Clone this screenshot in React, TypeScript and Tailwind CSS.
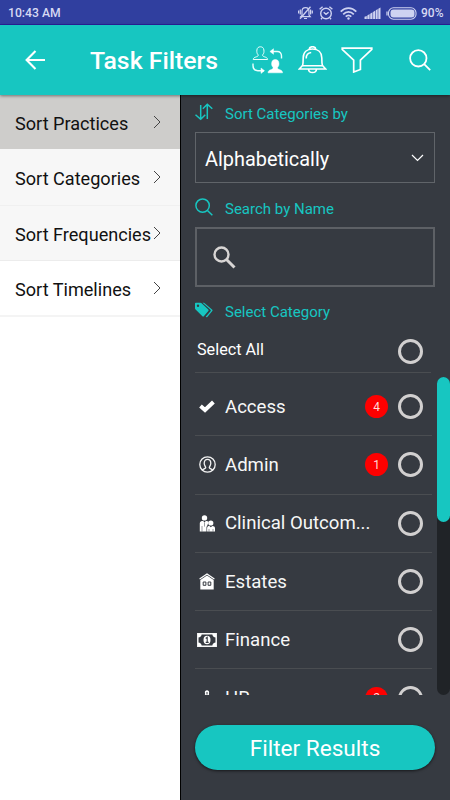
import type { ReactNode } from "react"

const menuItems = [
  { label: "Sort Practices", className: "h-[54px] bg-[#cecdcb]" },
  { label: "Sort Categories", className: "h-[57px] border-b border-[#f0f0f0] bg-[#f7f7f7]" },
  { label: "Sort Frequencies", className: "h-[55px] border-b border-[#ececec] bg-[#f7f7f7]" },
  { label: "Sort Timelines", className: "h-[56px] border-b-2 border-[#f4f4f4] bg-white" },
]

const categories: { label: string; icon: ReactNode; count?: number }[] = [
  { label: "Access", icon: <CheckIcon />, count: 4 },
  { label: "Admin", icon: <UserCircleIcon />, count: 1 },
  { label: "Clinical Outcom...", icon: <PeopleIcon /> },
  { label: "Estates", icon: <HouseIcon /> },
  { label: "Finance", icon: <MoneyIcon /> },
  { label: "HR", icon: <PersonIcon />, count: 2 },
]

function BackIcon() {
  return (
    <svg width="21" height="20" viewBox="0 0 21 20" fill="none" stroke="#fff" strokeWidth="2.1">
      <path d="M10.500 1 1.600 10l8.900 9M1.600 10H20" />
    </svg>
  )
}

function SwapUsersIcon() {
  return (
    <svg width="32" height="28" viewBox="0 0 32 28" fill="none" stroke="#e9fffd" strokeWidth="1">
      <path d="M1.200 13.500c.2-1.800 1.500-2.100 3.200-2.700 1.500-.5 2-.9 1.700-2C4.800 7.500 4.700 5.700 4.900 4 5.100 1.700 6.600.8 8.400.8s3.300.9 3.500 3.200c.2 1.700.1 3.500-1.200 4.800-.3 1.100.2 1.500 1.700 2 1.700.6 3 .9 3.200 2.700Z" />
      <path
        d="M16 26.800c.2-2.200 1.500-2.600 3.400-3.300 1.500-.5 1.900-1.100 1.600-2.200-1.300-1.400-1.500-2.700-1.300-4.500.2-2.300 1.800-3.300 3.600-3.300s3.400 1 3.600 3.300c.2 1.800 0 3.100-1.300 4.500-.3 1.100.1 1.700 1.600 2.200 1.900.7 3.200 1.100 3.400 3.300Z"
        fill="#fff"
        stroke="#fff"
        strokeWidth=".5"
      />
      <path d="M29.500 12.500V10c0-3-1.500-4.500-4.200-4.500h-6M1 17.500v2c0 3.500 1.500 5.200 4.800 5.200h6" strokeWidth="1.400" />
      <path d="m21.500 2.700-3.600 2.800 3.600 2.800ZM9 22l3.500 2.700L9 27.400Z" fill="#fff" strokeWidth=".5" />
    </svg>
  )
}

function BellIcon() {
  return (
    <svg width="29" height="28" viewBox="0 0 29 28" fill="none" stroke="#fff" strokeWidth="1.600">
      <path d="M11.300 3.500c0-3.700 6.400-3.700 6.400 0M4.500 20c.7-2.500.7-5 .7-8 0-5.600 3.800-9 9.300-9s9.300 3.400 9.300 9c0 3 0 5.500.7 8" />
      <path d="M4.300 19.700h20.400l3 3.300H1.300ZM10.500 23.200c.3 4.400 7.700 4.400 8 0" />
      <path d="M8.200 12.500c0-3.300 1.800-5.700 5-6" />
    </svg>
  )
}

function FilterIcon() {
  return (
    <svg width="32" height="26" viewBox="0 0 32 26" fill="none" stroke="#fff" strokeWidth="1.700">
      <path d="M1.200 1.200h29.600v1.300L19.400 13v9.500L12.700 25V13L1.200 2.500Z" />
    </svg>
  )
}

function SearchIcon({ className }: { className?: string }) {
  return (
    <svg viewBox="0 0 22 22" fill="none" stroke="currentColor" strokeWidth="1.800" className={className}>
      <circle cx="9.300" cy="9.300" r="8.200" />
      <path d="m15.200 15.200 6 6" />
    </svg>
  )
}

function StatusIcons() {
  return (
    <div className="flex items-center text-[#ced2f1]">
      <svg width="15" height="14" viewBox="0 0 15 14" fill="none" stroke="currentColor" strokeWidth="1.200">
        <path d="M4 10V5.500C4 3 5.300 1.700 7.500 1.700S11 3 11 5.500V9l1.300 1.700H2.800L4 9.500M6 12.500h3M12.600 3.500v5M14.300 4.500v3M2.300 3.500v5M.6 4.500v3" />
        <path d="M12.500 .8 2 12.800" strokeWidth="1.300" />
      </svg>
      <svg width="14" height="14" viewBox="0 0 14 14" fill="none" stroke="currentColor" strokeWidth="1.400" className="ml-[6px]">
        <circle cx="7" cy="7.500" r="5.300" />
        <path d="M.6 3.300 3.600.8M13.400 3.300l-3-2.500M4.700 6.300 7 8.300l2.600-2M3 12l-1 1.300M11 12l1 1.300" />
      </svg>
      <svg width="17" height="13" viewBox="0 0 17 13" fill="none" stroke="currentColor" strokeWidth="1.700" className="ml-[7px]">
        <path d="M.7 4.700c4.500-4.700 11.100-4.700 15.600 0M3.200 7.300c3.100-3.200 7.500-3.200 10.600 0M5.700 9.700c1.700-1.800 3.900-1.800 5.600 0" />
        <circle cx="8.500" cy="11.500" r="1.200" fill="currentColor" stroke="none" />
      </svg>
      <svg width="17" height="12" viewBox="0 0 17 12" fill="currentColor" className="ml-[7px]">
        <path d="M.5 9.700 2.800 9v3H.5ZM3.300 8.500 5.600 7v5H3.300ZM6.200 6.700l2.300-1.400V12H6.200ZM9.100 4.900l2.200-1.300V12H9.100ZM11.900 3.200l1.800-1.100V12h-1.800ZM14.300 1.800 16.500.5V12h-2.200Z" />
      </svg>
      <svg width="31" height="13" viewBox="0 0 31 13" fill="none" stroke="currentColor" className="ml-[5px]">
        <rect x="2.500" y=".8" width="27.500" height="11.400" rx="5" strokeWidth="1.100" />
        <rect x="4.500" y="2.500" width="24" height="8" rx="3" fill="currentColor" stroke="none" />
        <path d="M1 4.500v4" strokeWidth="1.300" />
      </svg>
    </div>
  )
}

function SortIcon() {
  return (
    <svg width="18" height="18" viewBox="0 0 18 18" fill="none" stroke="currentColor" strokeWidth="1.500">
      <path d="M5.700 2v14M.5 11.700l5.200 4.600 4.600-4.600M12.300 16V1.500M7.800 5.700l4.500-4.500 5 4.500" />
    </svg>
  )
}

function TagsIcon() {
  return (
    <svg width="18" height="16" viewBox="0 0 18 16" fill="currentColor">
      <path
        fillRule="evenodd"
        d="M0 1.500Q0 .8.800.8h4.500q.8 0 1.300.5l6.700 6.200q.8.800 0 1.500l-4.500 5.300q-.7.700-1.400 0L.6 7.600Q0 7 0 6.200ZM3 2.600a1.200 1.200 0 1 0 0 2.400 1.200 1.200 0 0 0 0-2.400Z"
      />
      <path d="M7.500.8h1.400l.8.500 7.600 6.400q.6.600 0 1.200l-5 6q-.7.700-1.600-.1l4.800-5.500q.7-.8 0-1.500Z" />
    </svg>
  )
}

function CheckIcon() {
  return (
    <svg width="16" height="13" viewBox="0 0 16 13" fill="none" stroke="#fff" strokeWidth="4">
      <path d="m1.500 6 4.500 4L14.400 2" />
    </svg>
  )
}

function UserCircleIcon() {
  return (
    <svg width="17" height="17" viewBox="0 0 17 17" fill="none" stroke="#f4f4f4" strokeWidth="1.300">
      <circle cx="8.500" cy="8.500" r="7.700" />
      <path d="M3.300 14.200c.5-1.200 3-1.500 3.400-2.400.2-.8-1.500-2.300-1.500-4.500 0-2.600 1.200-4 3.300-4s3.300 1.400 3.300 4c0 2.200-1.700 3.700-1.500 4.500.4.900 2.900 1.200 3.400 2.400" />
    </svg>
  )
}

function PeopleIcon() {
  return (
    <svg width="17" height="17" viewBox="0 0 17 17" fill="#fff">
      <circle cx="5.500" cy="2.900" r="2.700" />
      <path d="M.8 16.500V8.300c0-1.800 1.300-2.300 3.400-2.300l1.300 1.600L6.800 6c1.400 0 2.300.3 2.800 1L8.500 10l-1 2v4.500Z" />
      <circle cx="11.800" cy="8" r="2.600" />
      <path d="M8.100 16.500v-3.200c0-1.600.9-2.200 2.300-2.200l1.400 1.200 1.500-1.200c1.700 0 2.700.7 2.700 2.200v3.200Z" />
      <path d="M5.500 7.600v4M3 11v5.500M10 14v2.500M14 14v2.500" stroke="#363a41" strokeWidth=".5" />
    </svg>
  )
}

function HouseIcon() {
  return (
    <svg width="16" height="17" viewBox="0 0 16 17" fill="none" stroke="#fff">
      <path d="M.6 6.100 8 .9l7.400 5.200" strokeWidth="1.200" />
      <path d="M1.300 7 8 2.600 14.700 7v9.600H1.300Z" fill="#fff" stroke="none" />
      <path d="M4.200 9h2.700v3.300H4.200ZM9.100 9h2.700v3.300H9.100Z" stroke="#363a41" />
    </svg>
  )
}

function MoneyIcon() {
  return (
    <svg width="20" height="14" viewBox="0 0 20 14" fill="none" stroke="#f7f7f7">
      <path d="M.8.8h18.400v12.400H.8Z" strokeWidth="1.500" />
      <path
        d="M1 1h3.700C4.500 3.300 3.500 4.300 1 4.500ZM19 1h-3.700c.2 2.300 1.200 3.300 3.700 3.500ZM1 13h3.700C4.500 10.700 3.500 9.700 1 9.500ZM19 13h-3.700c.2-2.300 1.200-3.300 3.700-3.500Z"
        fill="#fff"
        stroke="none"
      />
      <ellipse cx="10" cy="7" rx="3.500" ry="4.200" fill="#fff" stroke="none" />
      <path d="M8.700 5.500 10.200 4.300v5M8.700 9.400h3" stroke="#363a41" strokeWidth="1.100" />
    </svg>
  )
}

function PersonIcon() {
  return (
    <svg width="16" height="17" viewBox="0 0 16 17" fill="#fff">
      <path d="M8 .3c1.700 0 2.300 1.300 2.100 2.600-.1 1-.5 1.500 0 1.900l1.700 1.200V16H4.200V6l1.700-1.200c.5-.4.100-.9 0-1.900C5.700 1.600 6.300.3 8 .3Z" />
      <path d="M8 2v2.500" stroke="#363a41" />
    </svg>
  )
}

function Radio() {
  return <span className="block size-[25px] shrink-0 rounded-full border-3 border-[#d2d0d0]" />
}

function SectionTitle({ icon, children }: { icon: ReactNode; children: ReactNode }) {
  return (
    <div className="flex h-5 items-center text-[#17c6c1]">
      <span className="w-[30px] shrink-0 pb-[2px]">{icon}</span>
      <span className="pt-[2px] text-[15px] leading-5 whitespace-nowrap">{children}</span>
    </div>
  )
}

export default function App() {
  return (
    <div className="flex h-[800px] w-[450px] flex-col overflow-hidden bg-white font-['Roboto',sans-serif]">
      <div className="flex h-[25px] shrink-0 items-center border-b border-[#2b1f9c] bg-[#303f9f] pt-[2px] pr-2 pl-2">
        <span className="grow text-[12.200px] font-medium text-[#d6d9f3]">10:43 AM</span>
        <StatusIcons />
        <span className="ml-1 w-[21px] text-[12px] font-medium whitespace-nowrap text-[#d6d9f3]">90%</span>
      </div>

      <header className="z-10 flex h-[70px] shrink-0 items-center bg-[#17c6c1] pl-[25px] shadow-[0_1px_3px_rgba(0,0,0,0.45)]">
        <BackIcon />
        <h1 className="ml-[44px] w-[162px] pt-[2px] text-[24.800px] font-medium whitespace-nowrap text-white">
          Task Filters
        </h1>
        <SwapUsersIcon />
        <div className="ml-[14px]">
          <BellIcon />
        </div>
        <div className="ml-[14px]">
          <FilterIcon />
        </div>
        <SearchIcon className="ml-[36px] size-[22px] text-white" />
      </header>

      <div className="flex min-h-0 grow">
        <nav className="w-[180px] shrink-0">
          {menuItems.map((item) => (
            <div key={item.label} className={`flex items-center pr-[19px] pl-[15px] ${item.className}`}>
              <span className="w-[138px] pt-[3px] text-[18.100px] whitespace-nowrap text-[#111]">{item.label}</span>
              <svg width="8" height="14" viewBox="0 0 8 14" fill="none" stroke="#444" className="shrink-0">
                <path d="m1 1 6 6-6 6" />
              </svg>
            </div>
          ))}
        </nav>

        <main className="flex w-[270px] flex-col border-l border-black bg-[#363a41] pt-2 pl-[14px]">
          <SectionTitle icon={<SortIcon />}>Sort Categories by</SectionTitle>
          <div className="mt-[9px] flex h-[51px] w-[240px] shrink-0 items-center justify-between border border-[#606469] pr-[10px] pl-[9px]">
            <span className="pt-[4px] text-[19.900px] text-white">Alphabetically</span>
            <svg width="13" height="8" viewBox="0 0 13 8" fill="none" stroke="#fff" strokeWidth="1.200">
              <path d="m1 1 5.500 5.500L12 1" />
            </svg>
          </div>

          <div className="mt-[15px]">
            <SectionTitle icon={<SearchIcon className="size-[18px]" />}>Search by Name</SectionTitle>
          </div>
          <div className="mt-[9px] flex h-[60px] w-[240px] shrink-0 items-center border-2 border-[#5d6065] pb-px pl-[15px]">
            <svg width="24" height="24" viewBox="0 0 24 24" fill="none" stroke="#d8d5d4" strokeWidth="2.400">
              <circle cx="9.500" cy="9.500" r="7" />
              <path d="m14.500 14.500 8 8" strokeWidth="3" />
            </svg>
          </div>

          <div className="mt-[14px]">
            <SectionTitle icon={<TagsIcon />}>Select Category</SectionTitle>
          </div>

          <div className="flex h-[52px] w-[236px] shrink-0 items-center border-b border-[#4a4d51] pl-[2px]">
            <span className="w-[201px] pt-[7px] text-[16.200px] text-white">Select All</span>
            <div className="pt-[9px]">
              <Radio />
            </div>
          </div>

          <div className="mt-1 flex h-[318px] shrink-0">
            <div className="w-[237px] overflow-hidden pt-px">
              {categories.map((category) => (
                <div key={category.label} className="flex h-[58.300px] items-center border-b border-[#4a4d51]">
                  <span className="flex w-[24px] shrink-0 justify-center">{category.icon}</span>
                  <span className="ml-[6px] w-[140px] shrink-0 pt-[2px] text-[18.600px] whitespace-nowrap text-[#f7f7f7]">
                    {category.label}
                  </span>
                  <span className="w-[33px] shrink-0">
                    {category.count && (
                      <span className="flex size-[23px] items-center justify-center rounded-full bg-[#fe0000] text-[12px] text-[#ffd9d9]">
                        {category.count}
                      </span>
                    )}
                  </span>
                  <Radio />
                </div>
              ))}
            </div>
            <div className="ml-[5px] w-[13px] rounded-full bg-[#202327]">
              <div className="h-[145px] rounded-full bg-[#17c6c1]" />
            </div>
          </div>

          <button className="mt-[30px] h-[45px] w-[240px] shrink-0 rounded-full bg-[#17c6c1] pt-[3px] text-[22.600px] text-white shadow-[0_1px_3px_rgba(0,0,0,0.6)]">
            Filter Results
          </button>
        </main>
      </div>
    </div>
  )
}
